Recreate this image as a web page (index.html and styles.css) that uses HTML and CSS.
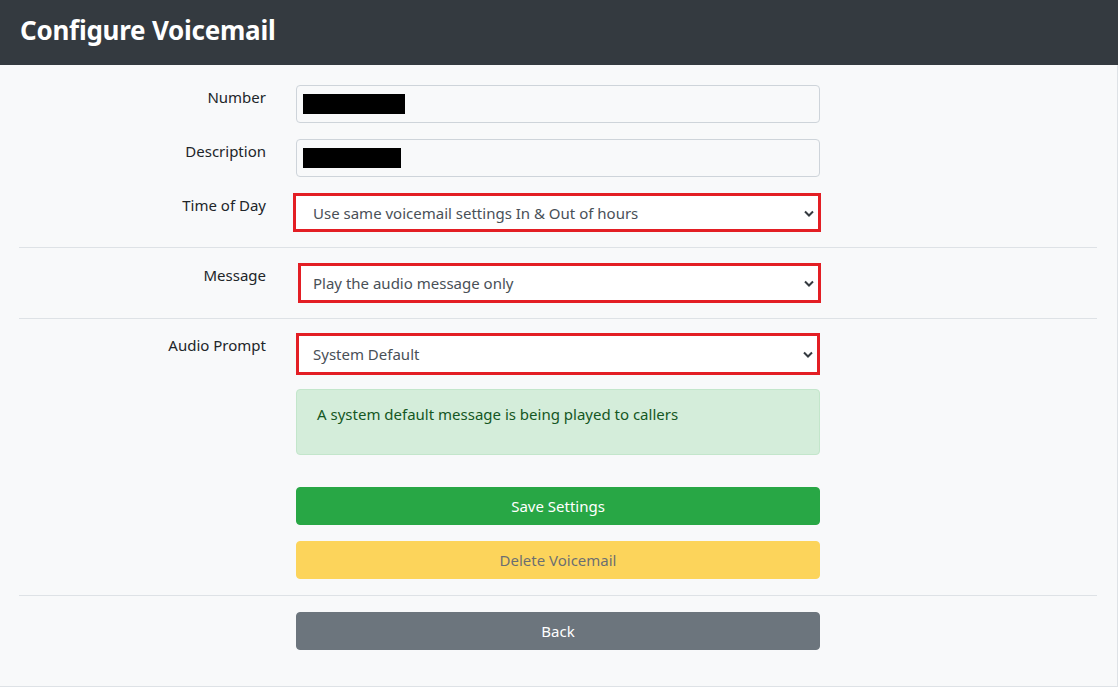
FILE: index.html
```html
<!DOCTYPE html>
<html lang="en">
<head>
<meta charset="utf-8">
<title>Configure Voicemail</title>
<link rel="stylesheet" href="styles.css">
</head>
<body>
<header class="topbar">
  <h1 class="title">Configure Voicemail</h1>
</header>
<main class="panel">
  <section class="group">
    <div class="row">
      <label class="label">Number</label>
      <div class="field"><div class="input"><span class="redact redact-a"></span></div></div>
    </div>
    <div class="row">
      <label class="label">Description</label>
      <div class="field"><div class="input"><span class="redact redact-b"></span></div></div>
    </div>
    <div class="row">
      <label class="label">Time of Day</label>
      <div class="field">
        <div class="select sel-wide">
          <span class="sel-text">Use same voicemail settings In &amp; Out of hours</span>
          <svg class="chev" width="10" height="7" viewBox="0 0 10 7"><path d="M1 1.5l4 4 4-4" fill="none" stroke="#343a40" stroke-width="2"/></svg>
        </div>
      </div>
    </div>
  </section>
  <hr class="rule rule-1">
  <section class="group">
    <div class="row">
      <label class="label">Message</label>
      <div class="field">
        <div class="select sel-msg">
          <span class="sel-text">Play the audio message only</span>
          <svg class="chev" width="10" height="7" viewBox="0 0 10 7"><path d="M1 1.5l4 4 4-4" fill="none" stroke="#343a40" stroke-width="2"/></svg>
        </div>
      </div>
    </div>
  </section>
  <hr class="rule rule-2">
  <section class="group">
    <div class="row">
      <label class="label">Audio Prompt</label>
      <div class="field">
        <div class="select sel-audio">
          <span class="sel-text">System Default</span>
          <svg class="chev" width="10" height="7" viewBox="0 0 10 7"><path d="M1 1.5l4 4 4-4" fill="none" stroke="#343a40" stroke-width="2"/></svg>
        </div>
      </div>
    </div>
    <div class="row row-alert">
      <div class="label"></div>
      <div class="field">
        <div class="alert">A system default message is being played to callers</div>
      </div>
    </div>
    <div class="row row-btns">
      <div class="label"></div>
      <div class="field btns">
        <button class="btn btn-save">Save Settings</button>
        <button class="btn btn-delete" disabled>Delete Voicemail</button>
      </div>
    </div>
  </section>
  <hr class="rule rule-3">
  <section class="group">
    <div class="row">
      <div class="label"></div>
      <div class="field"><button class="btn btn-back">Back</button></div>
    </div>
  </section>
</main>
</body>
</html>
```

FILE: styles.css
```css
* { box-sizing: border-box; }
html, body { margin: 0; padding: 0; }
body {
  background: #f8f9fa;
  font-family: "Noto Sans", "Open Sans", sans-serif;
  font-size: 15px;
  color: #212529;
  width: 1118px;
  height: 687px;
  overflow: hidden;
}
.topbar {
  background: #343a40;
  height: 65px;
  display: flex;
  align-items: center;
  padding: 0 0 6px 20px;
}
.title {
  margin: 0;
  color: #fff;
  font-size: 26px;
  font-weight: 700;
  letter-spacing: -0.25px;
}
.panel {
  border-right: 1px solid #dee2e6;
  border-bottom: 1px solid #dee2e6;
  height: 622px;
  padding: 20px 20px 0 19px;
}
.group { display: flex; flex-direction: column; gap: 16px; }
.row {
  display: grid;
  grid-template-columns: 247px 524px;
  column-gap: 30px;
  align-items: start;
}
.row-alert { margin-top: -2px; }
.row-btns { margin-top: 16px; }
.label {
  text-align: right;
  line-height: 24px;
}
.input {
  height: 38px;
  border: 1px solid #ced4da;
  border-radius: 4px;
  background: #f8f9fa;
  display: flex;
  align-items: center;
  padding-left: 6px;
}
.redact { display: block; background: #000; height: 20px; }
.redact-a { width: 102px; }
.redact-b { width: 98px; }
.select {
  position: relative;
  height: 40px;
  border: 3px solid #e31e24;
  background: #fff;
  display: flex;
  align-items: center;
  padding-left: 14px;
  color: #495057;
}
.sel-wide { margin-left: -3px; width: 528px; height: 39px; padding-left: 17px; }
.sel-msg { margin-left: 2px; width: 523px; padding-left: 12px; }
.sel-audio { width: 524px; height: 42px; }
.chev { position: absolute; right: 4px; top: 50%; margin-top: -3px; }
.sel-text { line-height: 24px; }
.rule {
  border: 0;
  border-top: 1px solid #dee2e6;
  margin: 15px 0;
  width: 1078px;
}
.rule-1 { margin-top: 15px; }
.rule-2 { margin-bottom: 14px; }
.rule-3 { margin-top: 16px; margin-bottom: 16px; }
.alert {
  background: #d4edda;
  border: 1px solid #c3e6cb;
  color: #155724;
  border-radius: 4px;
  padding: 12px 20px 28px 20px;
  line-height: 24px;
}
.btns { display: flex; flex-direction: column; gap: 16px; }
.btn {
  display: block;
  width: 524px;
  height: 38px;
  border: 1px solid transparent;
  border-radius: 4px;
  font-family: inherit;
  font-size: 15px;
  line-height: 24px;
  color: #fff;
  padding: 0;
  text-align: center;
}
.btn-save { background: #28a745; border-color: #28a745; }
.btn-delete { background: #ffc107; border-color: #ffc107; color: #212529; opacity: .65; }
.btn-back { background: #6c757d; border-color: #6c757d; }
```
